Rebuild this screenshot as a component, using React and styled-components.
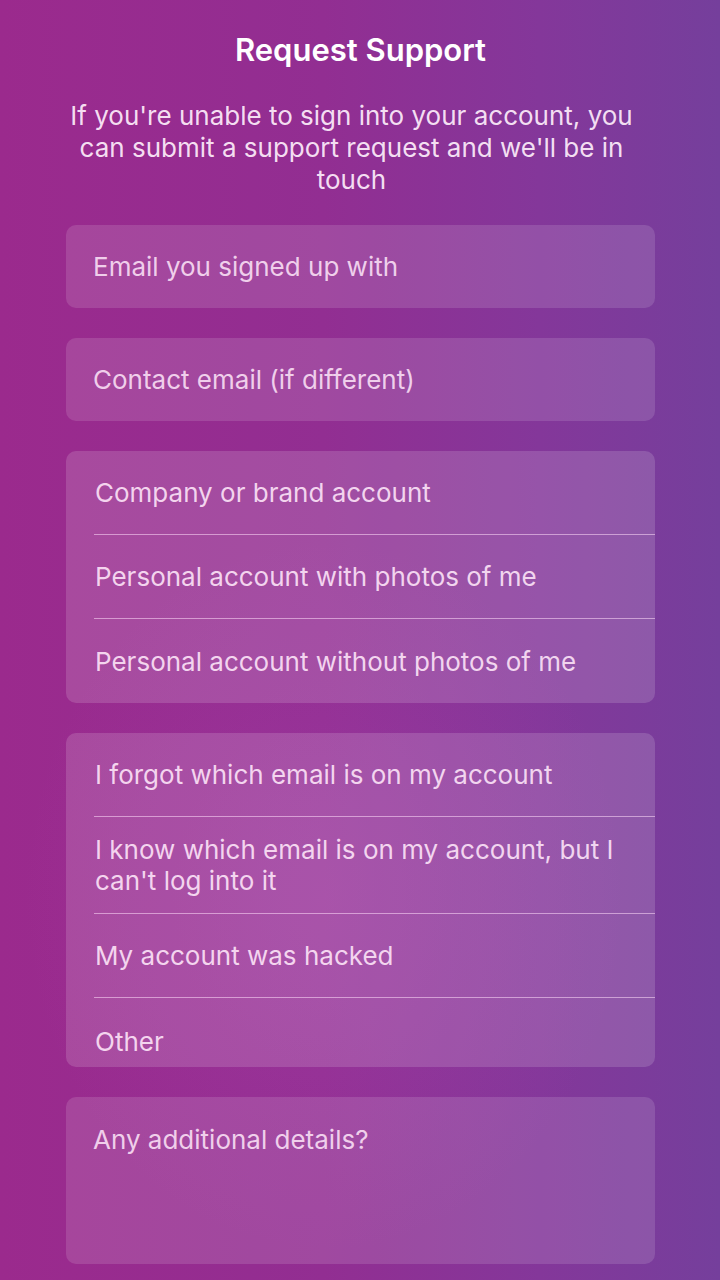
import styled, { createGlobalStyle } from 'styled-components';

const GlobalStyle = createGlobalStyle`
    * { box-sizing: border-box; }
    body {
        margin: 0;
        font-family: Inter, "Noto Sans", sans-serif;
        -webkit-font-smoothing: antialiased;
    }
`

const accountTypes = [
    'Company or brand account',
    'Personal account with photos of me',
    'Personal account without photos of me',
];

const problems = [
    { label: 'I forgot which email is on my account' },
    { label: "I know which email is on my account, but I can't log into it", tall: true },
    { label: 'My account was hacked' },
    { label: 'Other', last: true },
];

const App = () => {
    return (
        <Page>
            <GlobalStyle />
            <Title>Request Support</Title>
            <Intro>
                If you're unable to sign into your account, you can submit a support request and we'll be in touch
            </Intro>
            <Form>
                <Field placeholder="Email you signed up with" />
                <Field placeholder="Contact email (if different)" />
                <Card>
                    {accountTypes.map((label, i) => (
                        <Option key={label} divider={i < accountTypes.length - 1}>{label}</Option>
                    ))}
                </Card>
                <Card>
                    {problems.map((p, i) => (
                        <Option key={p.label} tall={p.tall} last={p.last} divider={i < problems.length - 1}>
                            {p.label}
                        </Option>
                    ))}
                </Card>
                <Details placeholder="Any additional details?" />
            </Form>
        </Page>
    )
}

export default App;


const Page = styled.div`
    min-height: 1280px;
    padding: 30px 65px 0 66px;
    background:
        radial-gradient(ellipse 60% 40% at 45% 70%, rgba(190, 90, 200, 0.18), transparent 70%),
        linear-gradient(90deg, #9b2a8d 0%, #922e92 45%, #84379a 75%, #753f9c 100%);
    color: rgba(255, 255, 255, 0.9);
`
const Title = styled.h1`
    margin: 0;
    font-size: 31px;
    line-height: 40px;
    font-weight: 600;
    text-align: center;
    color: #fff;
`
const Intro = styled.p`
    margin: 30px 3px 0 -15px;
    font-size: 26px;
    line-height: 32px;
    text-align: center;
    color: rgba(255, 240, 252, 0.92);
`
const Form = styled.div`
    margin-top: 29px;
    display: flex;
    flex-direction: column;
    gap: 30px;
`
const Field = styled.input`
    display: block;
    width: 100%;
    height: 83px;
    padding: 0 27px;
    border: none;
    border-radius: 10px;
    background: rgba(255, 255, 255, 0.13);
    font-family: inherit;
    font-size: 26px;
    color: #fff;
    outline: none;
    &::placeholder {
        color: rgba(255, 232, 250, 0.85);
    }
`
const Card = styled.div`
    border-radius: 10px;
    background: rgba(255, 255, 255, 0.15);
    padding-left: 28px;
    overflow: hidden;
`
const Option = styled.div`
    display: flex;
    align-items: center;
    height: ${props => props.tall ? '97px' : props.last ? '69px' : '84px'};
    padding: ${props => props.last ? '17px 30px 0 1px' : '0 30px 0 1px'};
    border-bottom: ${props => props.divider ? '1px solid rgba(255, 220, 250, 0.55)' : 'none'};
    font-size: 26px;
    line-height: 31px;
    color: rgba(255, 232, 250, 0.88);
`
const Details = styled.textarea`
    display: block;
    width: 100%;
    height: 167px;
    padding: 27px 27px;
    border: none;
    border-radius: 10px;
    background: rgba(255, 255, 255, 0.13);
    font-family: inherit;
    font-size: 26px;
    line-height: 32px;
    color: #fff;
    resize: none;
    outline: none;
    &::placeholder {
        color: rgba(255, 232, 250, 0.85);
    }
`
